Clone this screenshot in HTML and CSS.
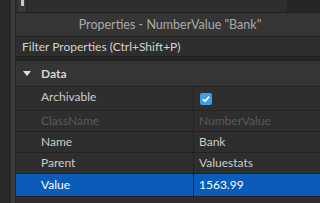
FILE: index.html
```html
<!DOCTYPE html>
<html lang="en">
<head>
    <meta charset="UTF-8">
    <title>Properties</title>
    <link rel="stylesheet" href="styles.css">
</head>
<body>
<div class="app">
    <div class="side"></div>
    <div class="main">
        <div class="topbar">
            <div class="topbar-thumb"><span class="grip"></span></div>
            <div class="topbar-fill"></div>
            <div class="topbar-end"></div>
        </div>
        <div class="panel">
            <div class="title">Properties - NumberValue "Bank"</div>
            <div class="filter">Filter Properties (Ctrl+Shift+P)</div>
            <div class="gap"></div>
            <div class="section">
                <span class="arrow"></span>
                <span class="section-name">Data</span>
            </div>
            <div class="row tall">
                <div class="name">Archivable</div>
                <div class="value"><span class="check">
                    <svg width="12" height="12" viewBox="0 0 12 12"><path d="M2.8 6.2 L5 8.2 L9.2 3.6" fill="none" stroke="#fff" stroke-width="1.7"/></svg>
                </span></div>
            </div>
            <div class="row dim">
                <div class="name">ClassName</div>
                <div class="value">NumberValue</div>
            </div>
            <div class="row">
                <div class="name">Name</div>
                <div class="value">Bank</div>
            </div>
            <div class="row">
                <div class="name">Parent</div>
                <div class="value">Valuestats</div>
            </div>
            <div class="row selected">
                <div class="name">Value</div>
                <div class="value">1563.99</div>
            </div>
            <div class="row empty"></div>
        </div>
    </div>
</div>
</body>
</html>
```
FILE: styles.css
```css
body {
    margin: 0;
    background-color: #262626;
    font-family: Lato, "Liberation Sans", sans-serif;
    font-size: 12px;
    color: #cccccc;
}
.app {
    display: flex;
    width: 320px;
    height: 203px;
    overflow: hidden;
}
.side {
    width: 11px;
    background-color: #282828;
    border-right: 4px solid #3a3a3a;
    margin-right: 1px;
}
.main {
    flex: 1;
    display: flex;
    flex-direction: column;
    background-color: #262626;
}
.main > *, .panel > * {
    flex-shrink: 0;
}
.topbar {
    display: flex;
    height: 12px;
    background-color: #2e2e2e;
    border-bottom: 1px solid #1f1f1f;
}
.topbar-thumb {
    width: 8px;
    margin-left: 2px;
    background-color: #3a3a3a;
    border-right: 1px solid #222;
    display: flex;
    justify-content: center;
}
.grip {
    width: 3px;
    height: 6px;
    background-color: #c8c8c8;
}
.topbar-fill {
    flex: 1;
}
.topbar-end {
    width: 33px;
    background-color: #252525;
}
.panel {
    flex: 1;
    display: flex;
    flex-direction: column;
    background-color: #2e2e2e;
}
.title {
    height: 23px;
    line-height: 24px;
    text-align: center;
    background-color: #353535;
    color: #aaaaaa;
    border-bottom: 1px solid #1f1f1f;
    padding-left: 4px;
    font-size: 12.5px;
}
.filter {
    height: 19px;
    line-height: 19px;
    padding-left: 6px;
    background-color: #2e2e2e;
    color: #d4d4d4;
    border-bottom: 1px solid #1f1f1f;
}
.gap {
    height: 3px;
    background-color: #262626;
    border-bottom: 1px solid #1f1f1f;
}
.section {
    display: flex;
    align-items: center;
    height: 25px;
    background-color: #353535;
    border-bottom: 1px solid #222222;
}
.arrow {
    width: 0;
    height: 0;
    margin-left: 7px;
    margin-right: 10px;
    border-left: 4px solid transparent;
    border-right: 4px solid transparent;
    border-top: 5px solid #e0e0e0;
}
.section-name {
    font-weight: bold;
    color: #d4d4d4;
}
.row {
    display: flex;
    height: 20px;
    line-height: 20px;
    border-bottom: 1px solid #232323;
    color: #cccccc;
}
.row.tall {
    height: 23px;
}
.row .name {
    width: 152px;
    padding-left: 25px;
    border-right: 1px solid #222222;
}
.row .value {
    flex: 1;
    padding-left: 5px;
    display: flex;
    align-items: center;
}
.row.dim {
    color: #5a5a5a;
}
.row.selected {
    height: 22px;
    line-height: 22px;
    background-color: #0b5cb8;
    color: #ffffff;
}
.row.empty {
    border-bottom: none;
}
.check {
    width: 12px;
    height: 12px;
    margin-left: 1px;
    border-radius: 2px;
    background-color: #3a9eea;
    display: flex;
}
```
